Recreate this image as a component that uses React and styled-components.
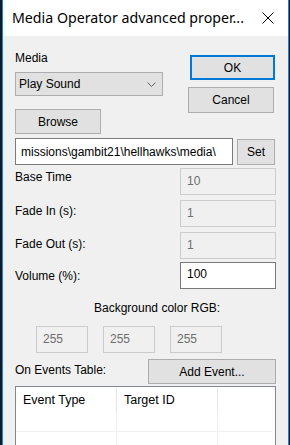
import React from 'react';
import styled, { createGlobalStyle } from 'styled-components';

const GlobalStyle = createGlobalStyle`
  html, body {
    margin: 0;
    padding: 0;
    background: #0d1b2a;
    overflow: hidden;
  }
  * {
    box-sizing: border-box;
  }
`;

const Window = styled.div`
  margin-left: 2px;
  width: 287px;
  height: 445px;
  border-left: 1px solid #1883d7;
  border-right: 1px solid #1883d7;
  background: #f0f0f0;
  font-family: "Liberation Sans", Arial, sans-serif;
  font-size: 12px;
  color: #000;
  display: flex;
  flex-direction: column;
  overflow: hidden;
`;

const TitleBar = styled.div`
  height: 36px;
  background: #fff;
  display: flex;
  align-items: center;
  justify-content: space-between;
  padding: 0 14px 0 9px;
  flex-shrink: 0;
`;

const Title = styled.div`
  font-family: "Noto Sans", "Open Sans", sans-serif;
  font-size: 14.2px;
  color: #000;
  padding-bottom: 1px;
`;

const CloseIcon = styled.svg`
  width: 12px;
  height: 12px;
  display: block;
`;

const Body = styled.div`
  padding: 0 0 0 12px;
  display: flex;
  flex-direction: column;
`;

const TopRow = styled.div`
  display: flex;
  justify-content: space-between;
  width: 260px;
`;

const LeftCol = styled.div`
  display: flex;
  flex-direction: column;
  width: 148px;
`;

const RightCol = styled.div`
  display: flex;
  flex-direction: column;
  width: 87px;
  padding-top: 19px;
`;

const Label = styled.div`
  line-height: 14px;
  white-space: nowrap;
  padding-top: ${p => p.$top || 0}px;
`;

const Select = styled.div`
  margin-top: 7px;
  height: 24px;
  background: #e1e1e1;
  border: 1px solid #adadad;
  display: flex;
  align-items: center;
  justify-content: space-between;
  padding: 0 6px 0 3px;
`;

const Chevron = styled.svg`
  width: 9px;
  height: 5px;
  display: block;
`;

const Button = styled.div`
  height: ${p => p.$h || 25}px;
  width: ${p => p.$w}px;
  margin-top: ${p => p.$mt || 0}px;
  margin-left: ${p => p.$ml || 0}px;
  background: #e1e1e1;
  border: ${p => (p.$primary ? '2px solid #0078d7' : '1px solid #adadad')};
  display: flex;
  align-items: center;
  justify-content: center;
  flex-shrink: 0;
`;

const PathRow = styled.div`
  display: flex;
  align-items: flex-start;
  gap: 4px;
  margin-top: 4px;
`;

const TextBox = styled.div`
  width: ${p => p.$w}px;
  height: 27px;
  background: ${p => (p.$disabled ? '#f0f0f0' : '#fff')};
  border: 1px solid ${p => (p.$disabled ? '#cccccc' : '#7a7a7a')};
  color: ${p => (p.$disabled ? '#6d6d6d' : '#000')};
  padding: ${p => p.$pt || 5}px 0 0 ${p => p.$pl || 6}px;
  line-height: 14px;
  white-space: nowrap;
  overflow: hidden;
  flex-shrink: 0;
`;

const FieldRow = styled.div`
  display: flex;
  justify-content: space-between;
  align-items: flex-start;
  width: 261px;
  margin-top: ${p => p.$mt}px;
`;

const Centered = styled.div`
  padding-left: 79px;
  margin-top: 12px;
  line-height: 14px;
`;

const RgbRow = styled.div`
  display: flex;
  gap: 15px;
  padding-left: 21px;
  margin-top: 11px;
`;

const EventsRow = styled.div`
  display: flex;
  justify-content: space-between;
  width: 261px;
  margin-top: 6px;
`;

const Table = styled.div`
  margin-top: 2px;
  width: 261px;
  height: 80px;
  background: #fff;
  border: 1px solid #828790;
  border-bottom: none;
  display: grid;
  grid-template-columns: 101px 101px 1fr;
  grid-template-rows: 25px 20px 1fr;
`;

const HeadCell = styled.div`
  padding: 5px 0 0 7px;
  line-height: 14px;
  font-size: 12.5px;
  border-right: ${p => (p.$last ? 'none' : '1px solid #e5e5e5')};
  margin-top: 1px;
`;

const Cell = styled.div`
  border-right: ${p => (p.$last ? 'none' : '1px solid #f0f0f0')};
  border-bottom: ${p => (p.$noline ? 'none' : '1px solid #f0f0f0')};
  margin-right: ${p => (p.$last ? 3 : 0)}px;
`;

const fields = [
  { label: 'Base Time', value: '10', disabled: true, mt: 3, top: 2 },
  { label: 'Fade In (s):', value: '1', disabled: true, mt: 5, top: 4 },
  { label: 'Fade Out (s):', value: '1', disabled: true, mt: 5, top: 5 },
  { label: 'Volume (%):', value: '100', disabled: false, mt: 3, top: 7, pt: 4 },
];

export default function App() {
  return (
    <>
      <GlobalStyle />
      <Window>
        <TitleBar>
          <Title>Media Operator advanced proper...</Title>
          <CloseIcon viewBox="0 0 12 12">
            <path d="M0.5 0.5 L11.5 11.5 M11.5 0.5 L0.5 11.5" stroke="#000" strokeWidth="1" fill="none" />
          </CloseIcon>
        </TitleBar>
        <Body>
          <TopRow>
            <LeftCol>
              <Label $top={15}>Media</Label>
              <Select>
                <span>Play Sound</span>
                <Chevron viewBox="0 0 9 5">
                  <path d="M0.5 0.5 L4.5 4.5 L8.5 0.5" stroke="#606060" strokeWidth="1" fill="none" />
                </Chevron>
              </Select>
              <Button $w={86} $mt={13}>Browse</Button>
            </LeftCol>
            <RightCol>
              <Button $w={85} $ml={2} $primary>OK</Button>
              <Button $w={86} $h={26} $mt={7}>Cancel</Button>
            </RightCol>
          </TopRow>
          <PathRow>
            <TextBox $w={218} $pl={5} $pt={6}>missions\gambit21\hellhawks\media\</TextBox>
            <Button $w={38} $h={26} $mt={1}>Set</Button>
          </PathRow>
          {fields.map(f => (
            <FieldRow key={f.label} $mt={f.mt}>
              <Label $top={f.top}>{f.label}</Label>
              <TextBox $w={96} $disabled={f.disabled} $pt={f.pt}>{f.value}</TextBox>
            </FieldRow>
          ))}
          <Centered>Background color RGB:</Centered>
          <RgbRow>
            {['255', '255', '255'].map((v, i) => (
              <TextBox key={i} $w={52} $disabled $pt={5}>{v}</TextBox>
            ))}
          </RgbRow>
          <EventsRow>
            <Label $top={4}>On Events Table:</Label>
            <Button $w={128} $h={25}>Add Event...</Button>
          </EventsRow>
          <Table>
            <HeadCell>Event Type</HeadCell>
            <HeadCell>Target ID</HeadCell>
            <HeadCell $last />
            <Cell />
            <Cell />
            <Cell $last />
            <Cell $noline />
            <Cell $noline />
            <Cell $noline $last />
          </Table>
        </Body>
      </Window>
    </>
  );
}
